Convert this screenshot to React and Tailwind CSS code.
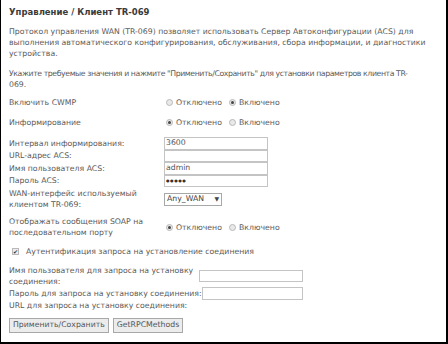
import React from 'react';

const font = { fontFamily: '"DejaVu Sans", Verdana, sans-serif' };

const Radio = ({ checked }) => (
  <span className="inline-flex items-center justify-center w-[7px] h-[7px] rounded-full border border-[#b8b8b8] bg-[#e9e9e9] mr-[3px]">
    {checked && <span className="w-[3px] h-[3px] rounded-full bg-[#444]" />}
  </span>
);

const RadioPair = ({ on }) => (
  <div className="flex items-center">
    <span className="flex items-center w-[63px]"><Radio checked={!on} />Отключено</span>
    <span className="flex items-center"><Radio checked={on} />Включено</span>
  </div>
);

const Input = ({ value, w = 'w-[104px]' }) => (
  <div className={`${w} h-[12.5px] border border-[#c4c4c4] bg-white flex items-center px-[1px] text-[#555] leading-none`}>
    {value}
  </div>
);

export default function App() {
  return (
    <div
      style={font}
      className="w-[448px] h-[344px] bg-white border-l border-r-2 border-b-2 border-black text-[7.75px] leading-[11px] text-[#5a5a5a] pl-[8px] pr-[16px] pt-[7px] overflow-hidden"
    >
      <div className="font-bold text-[#3a3a3a] text-[8.5px]">Управление / Клиент TR-069</div>

      <p className="mt-[8px]">
        Протокол управления WAN (TR-069) позволяет использовать Сервер Автоконфигурации (ACS) для выполнения
        автоматического конфигурирования, обслуживания, сбора информации, и диагностики устройства.
      </p>
      <p className="mt-[9px]">
        <span className="whitespace-nowrap tracking-[-0.4px]">
          Укажите требуемые значения и нажмите "Применить/Сохранить" для установки параметров клиента TR-
        </span>
        <br />
        069.
      </p>

      <div className="mt-[7px] flex items-center h-[11px]">
        <div className="w-[157px]">Включить CWMP</div>
        <RadioPair on />
      </div>
      <div className="mt-[9px] flex items-center h-[11px]">
        <div className="w-[157px]">Информирование</div>
        <RadioPair on={false} />
      </div>

      <div className="mt-[9px]">
        <div className="flex items-center">
          <div className="w-[155px]">Интервал информирования:</div>
          <Input value="3600" />
        </div>
        <div className="flex items-center">
          <div className="w-[155px]">URL-адрес ACS:</div>
          <Input value="" />
        </div>
        <div className="flex items-center">
          <div className="w-[155px]">Имя пользователя ACS:</div>
          <Input value="admin" />
        </div>
        <div className="flex items-center">
          <div className="w-[155px]">Пароль ACS:</div>
          <Input value={<span className="text-[4px] tracking-[0.6px] text-[#333]">●●●●●</span>} />
        </div>
        <div className="flex items-center mt-[1px]">
          <div className="w-[155px]">WAN-интерфейс используемый клиентом TR-069:</div>
          <div className="w-[58px] h-[13px] border border-[#a8a8a8] bg-white flex items-center px-[2px] text-[#444] leading-none">
            Any_WAN <span className="ml-auto text-[6px]">▼</span>
          </div>
        </div>
      </div>

      <div className="mt-[6px] flex items-center">
        <div className="w-[157px]">Отображать сообщения SOAP на последовательном порту</div>
        <RadioPair on={false} />
      </div>

      <div className="mt-[8px] flex items-center pl-[3px]">
        <span className="inline-flex items-center justify-center w-[7px] h-[7px] border border-[#b8b8b8] bg-[#eee] mr-[7px] text-[6px] leading-none text-[#333]">✔</span>
        Аутентификация запроса на установление соединения
      </div>

      <div className="mt-[8px]">
        <div className="flex items-center">
          <div className="w-[190px]">Имя пользователя для запроса на установку соединения:</div>
          <Input value="" w="w-[104px]" />
        </div>
        <div className="flex items-center">
          <div className="whitespace-nowrap w-[193px]">Пароль для запроса на установку соединения:</div>
          <Input value="" w="w-[101px]" />
        </div>
        <div>URL для запроса на установку соединения:</div>
      </div>

      <div className="mt-[7px] flex gap-[4px]">
        <button className="h-[15px] px-[3px] border border-[#a8a8a8] bg-[#ececec] text-[#555] leading-none">Применить/Сохранить</button>
        <button className="h-[15px] px-[3px] border border-[#a8a8a8] bg-[#ececec] text-[#555] leading-none">GetRPCMethods</button>
      </div>
    </div>
  );
}
